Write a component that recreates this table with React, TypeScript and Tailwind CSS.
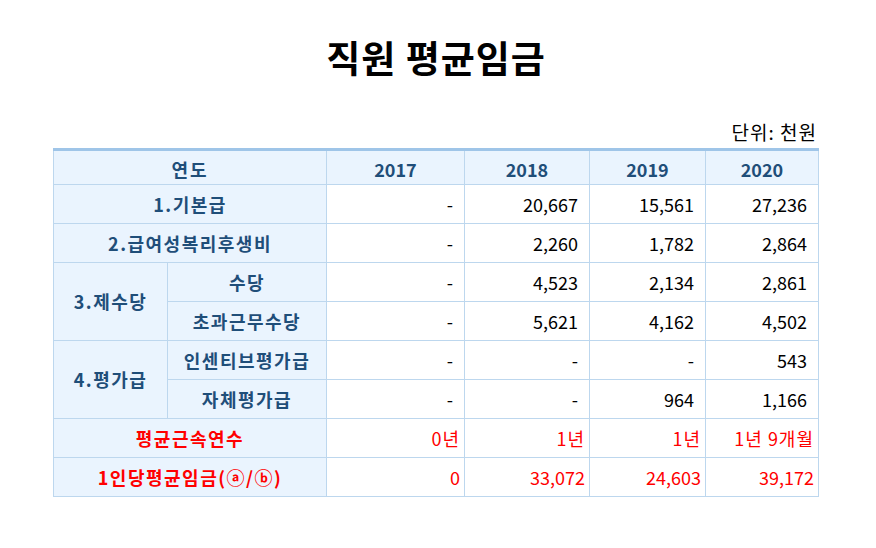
import React from 'react';

const years = ['2017', '2018', '2019', '2020'];

type Row = { group?: string; span?: number; label: string; values: string[]; red?: boolean; full?: boolean };

const rows: Row[] = [
  { label: '1.기본급', values: ['-', '20,667', '15,561', '27,236'], full: true },
  { label: '2.급여성복리후생비', values: ['-', '2,260', '1,782', '2,864'], full: true },
  { group: '3.제수당', span: 2, label: '수당', values: ['-', '4,523', '2,134', '2,861'] },
  { label: '초과근무수당', values: ['-', '5,621', '4,162', '4,502'] },
  { group: '4.평가급', span: 2, label: '인센티브평가급', values: ['-', '-', '-', '543'] },
  { label: '자체평가급', values: ['-', '-', '964', '1,166'] },
  { label: '평균근속연수', values: ['0년', '1년', '1년', '1년 9개월'], full: true, red: true },
  { label: '1인당평균임금(ⓐ/ⓑ)', values: ['0', '33,072', '24,603', '39,172'], full: true, red: true },
];

export default function App() {
  const font = { fontFamily: '"Noto Sans CJK KR", "Noto Sans", sans-serif' };
  return (
    <div className="w-[876px] h-[548px] bg-white" style={font}>
      <h1 className="pt-[33px] text-center text-[37px] leading-[48px] font-bold text-black pr-[4px] tracking-[1px]">직원 평균임금</h1>
      <div className="mt-[38px] w-[765px] ml-[53px]">
        <div className="text-right text-[19px] leading-[26px] text-black pr-[1px] tracking-[1px]">단위: 천원</div>
        <table className="mt-[3px] w-[765px] table-fixed border-collapse text-[18px]">
          <colgroup>
            <col className="w-[114px]" />
            <col className="w-[159px]" />
            <col className="w-[138px]" />
            <col className="w-[125px]" />
            <col className="w-[116px]" />
            <col className="w-[113px]" />
          </colgroup>
          <thead>
            <tr className="h-[35px]">
              <th colSpan={2} className="border border-[#bdd7ee] border-t-[3px] border-t-[#9fc5e8] bg-[#eaf4fe] font-bold text-[#1f4e79] pt-[3px] tracking-[2px]">연도</th>
              {years.map((y) => (
                <th key={y} className="border border-[#bdd7ee] border-t-[3px] border-t-[#9fc5e8] bg-[#eaf4fe] font-bold text-[#1f4e79] pt-[3px]">{y}</th>
              ))}
            </tr>
          </thead>
          <tbody>
            {rows.map((r) => (
              <tr key={r.label} className="h-[39px]">
                {r.group && (
                  <td rowSpan={r.span} className="border border-[#bdd7ee] bg-[#eaf4fe] text-center font-bold text-[#1f4e79] tracking-[1.5px]">{r.group}</td>
                )}
                <td
                  colSpan={r.full ? 2 : 1}
                  className={`border border-[#bdd7ee] bg-[#eaf4fe] text-center font-bold tracking-[1.5px] ${r.red ? 'text-[#ff0000]' : 'text-[#1f4e79]'}`}
                >
                  {r.label}
                </td>
                {r.values.map((v, i) => (
                  <td
                    key={i}
                    className={`border border-[#bdd7ee] text-right ${r.red ? 'text-[#ff0000] pr-[4px]' : 'text-black pr-[11px]'} ${v.includes('년') ? 'tracking-[1px]' : ''}`}
                  >
                    {v}
                  </td>
                ))}
              </tr>
            ))}
          </tbody>
        </table>
      </div>
    </div>
  );
}
